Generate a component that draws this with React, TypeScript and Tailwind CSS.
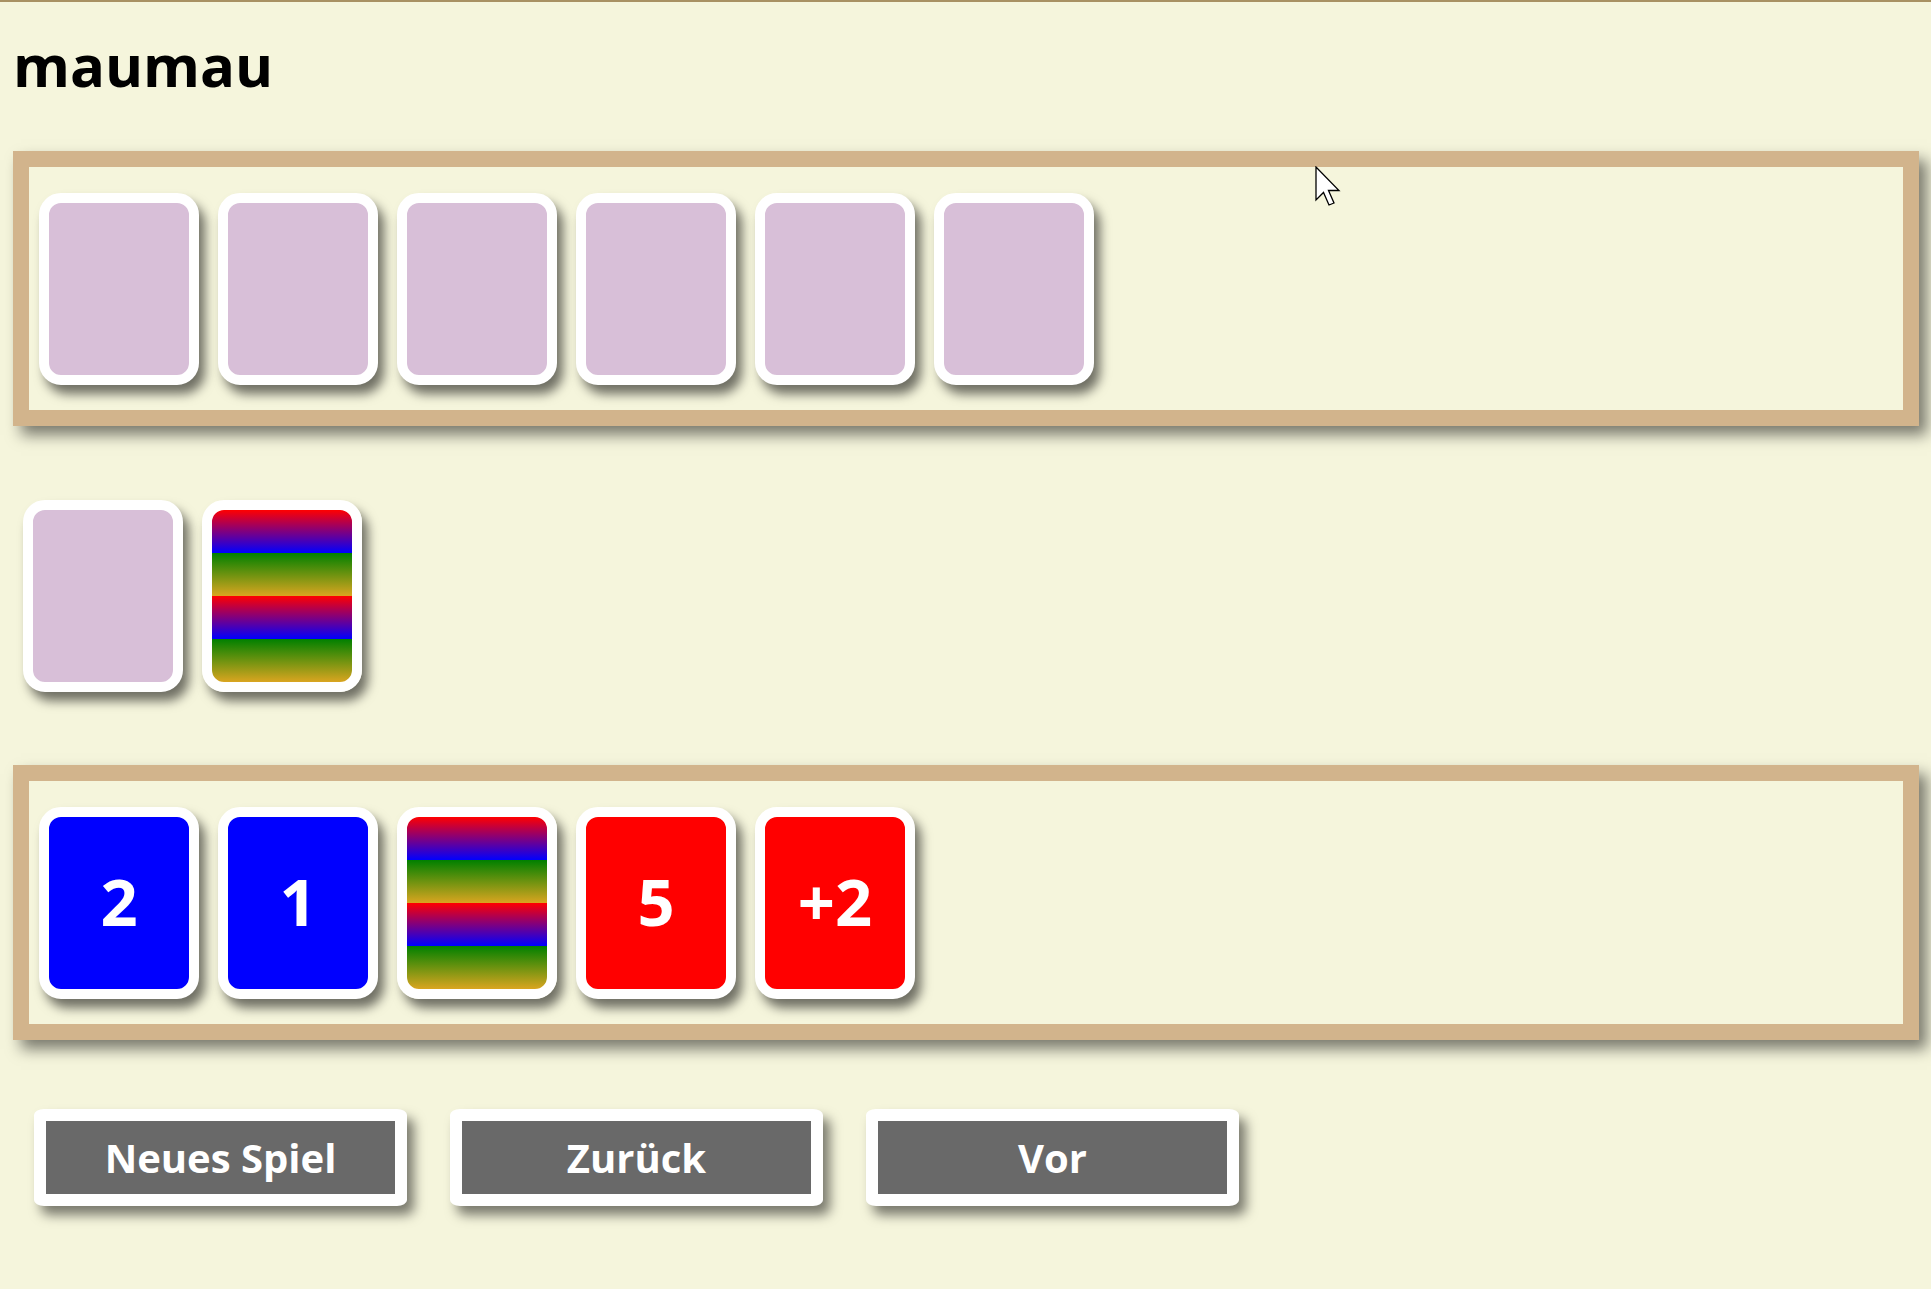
type CardKind = "back" | "rainbow" | "blue" | "red";

type CardData = { kind: CardKind; label?: string };

const faceClass: Record<CardKind, string> = {
  back: "bg-[#d8bfd8]",
  rainbow:
    "bg-[repeating-linear-gradient(to_bottom,#ff0000_0px,#0000ff_43px,#008000_43px,#daa520_86px)]",
  blue: "bg-[#0000ff]",
  red: "bg-[#ff0000]",
};

const opponent: CardData[] = Array.from({ length: 6 }, () => ({ kind: "back" }));

const table: CardData[] = [{ kind: "back" }, { kind: "rainbow" }];

const hand: CardData[] = [
  { kind: "blue", label: "2" },
  { kind: "blue", label: "1" },
  { kind: "rainbow" },
  { kind: "red", label: "5" },
  { kind: "red", label: "+2" },
];

function Card({ card }: { card: CardData }) {
  return (
    <div
      className={`w-[160px] h-[192px] shrink-0 flex items-center justify-center border-[10px] border-white rounded-[22px] shadow-[6px_9px_11px_rgba(0,0,0,0.55)] text-white text-[65px] font-bold leading-none pb-[3px] ${faceClass[card.kind]}`}
    >
      {card.label}
    </div>
  );
}

function Panel({ cards }: { cards: CardData[] }) {
  return (
    <section className="ml-[13px] w-[1906px] h-[275px] border-[16px] border-[#d2b48c] shadow-[8px_9px_14px_rgba(0,0,0,0.5)] flex items-start gap-[19px] pl-[10px] pt-[26px]">
      {cards.map((c, i) => (
        <Card key={i} card={c} />
      ))}
    </section>
  );
}

function Button({ children }: { children: string }) {
  return (
    <button
      type="button"
      className="w-[373px] h-[97px] border-[12px] border-white rounded-[10px/6px] bg-[#696969] text-white text-[40px] font-bold leading-none shadow-[7px_9px_12px_rgba(0,0,0,0.5)] flex items-center justify-center"
    >
      {children}
    </button>
  );
}

function Cursor() {
  return (
    <svg
      className="absolute left-[1315px] top-[164px]"
      width="26"
      height="42"
      viewBox="0 0 26 42"
    >
      <path
        d="M1 1 L1 34 L8.5 26.5 L14 39 L19 37 L13.5 24.5 L24 24.5 Z"
        fill="#ffffff"
        stroke="#000000"
        strokeWidth="1.3"
        strokeLinejoin="miter"
      />
    </svg>
  );
}

export default function App() {
  return (
    <div className="relative min-h-screen bg-[#f5f5dc] border-t-2 border-[#a89163] font-['Open_Sans','Noto_Sans',sans-serif] text-black">
      <h1 className="pl-[13px] pt-[34px] text-[58px] leading-none font-bold">maumau</h1>

      <div className="mt-[57px]">
        <Panel cards={opponent} />
      </div>

      <div className="mt-[74px] ml-[23px] flex gap-[19px]">
        {table.map((c, i) => (
          <Card key={i} card={c} />
        ))}
      </div>

      <div className="mt-[73px]">
        <Panel cards={hand} />
      </div>

      <div className="mt-[69px] ml-[34px] flex gap-[43px] pb-[80px]">
        <Button>Neues Spiel</Button>
        <Button>Zurück</Button>
        <Button>Vor</Button>
      </div>

      <Cursor />
    </div>
  );
}
